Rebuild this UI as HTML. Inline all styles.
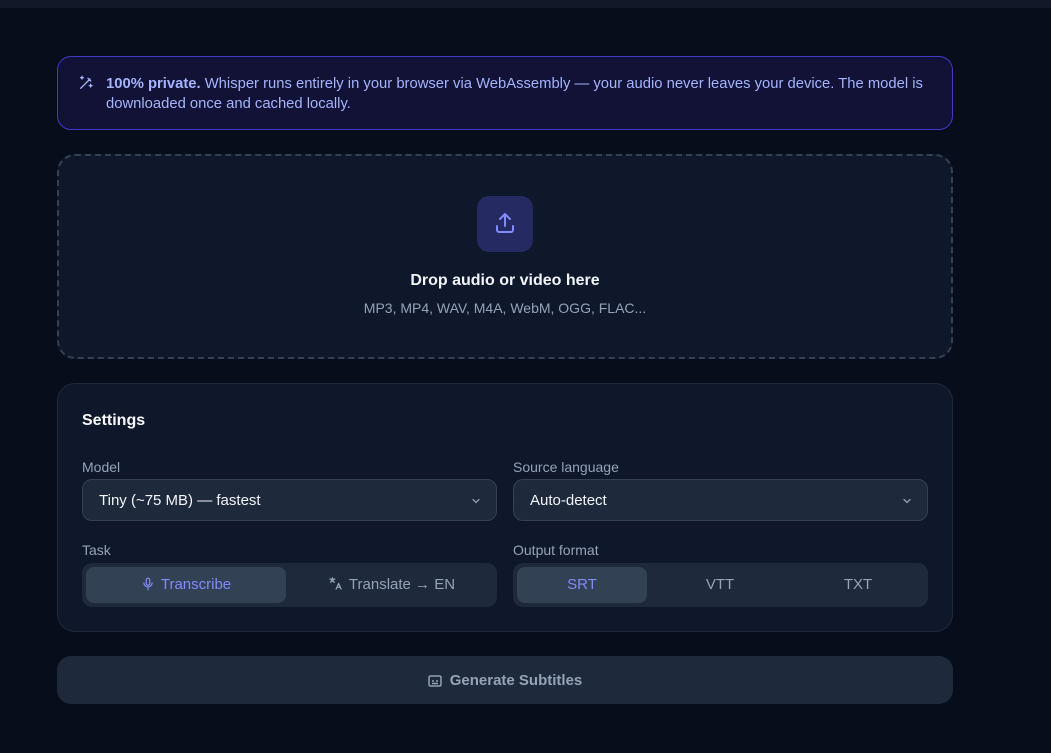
<!DOCTYPE html>
<html><head><meta charset="utf-8"><style>
*{box-sizing:border-box;margin:0;padding:0}
body{width:1051px;height:753px;background:#080d1c;font-family:"Liberation Sans",sans-serif;position:relative;overflow:hidden}
.top{position:absolute;left:0;top:0;width:1051px;height:8px;background:#111827}
.abs{position:absolute}
.banner{left:57px;top:56px;width:896px;height:74px;border:1px solid #4338ca;border-radius:14px;background:#111236}
.banner p{position:absolute;left:48px;top:17px;width:840px;font-size:14.8px;line-height:20px;color:#a5b4fc}
.drop{left:57px;top:154px;width:896px;height:205px;border:2px dashed #334155;border-radius:18px;background:#0f172a}
.ic{left:418px;top:40px;width:56px;height:56px;border-radius:12px;background:#262a63}
.settings{left:57px;top:383px;width:896px;height:249px;border:1px solid #1e293b;border-radius:18px;background:#0f172a}
.lbl{font-size:14px;color:#94a3b8}
.sel{height:42px;border:1px solid #334155;border-radius:10px;background:#1e293b;color:#f1f5f9;font-size:15px;line-height:41px;padding-left:16px}
.seg{height:44px;border-radius:10px;background:#1e293b}
.on{position:absolute;top:4px;height:36px;border-radius:8px;background:#334155}
.t{position:absolute;top:0;line-height:44px;font-size:15px;color:#94a3b8;text-align:center}
.t svg{vertical-align:-2px;margin-right:6px}
.btn{left:57px;top:656px;width:896px;height:48px;border-radius:14px;background:#1e293b;color:#94a3b8;font-weight:bold;font-size:15px;line-height:49px;text-align:center}
.chev{position:absolute;right:14px;top:15px}
</style></head><body>
<div class="top"></div>
<div class="abs banner">
<svg class="abs" style="left:20px;top:18px" width="16" height="16" viewBox="0 0 24 24" fill="none" stroke="#a5b4fc" stroke-width="2" stroke-linecap="round"><path d="M4 20L18 6M15 5l4 4M6 2v4M4 4h4M19 14v4M17 16h4"/></svg>
<p><b>100% private.</b> Whisper runs entirely in your browser via WebAssembly — your audio never leaves your device. The model is downloaded once and cached locally.</p>
</div>
<div class="abs drop">
<div class="abs ic"><svg class="abs" style="left:16px;top:15px" width="24" height="24" viewBox="0 0 24 24" fill="none" stroke="#818cf8" stroke-width="2" stroke-linecap="round" stroke-linejoin="round"><path d="M12 15V3M7 8l5-5 5 5M4 15v4a2 2 0 002 2h12a2 2 0 002-2v-4"/></svg></div>
<div class="abs" style="left:0;width:892px;top:116px;text-align:center;font-size:16px;font-weight:bold;color:#f1f5f9">Drop audio or video here</div>
<div class="abs" style="left:0;width:892px;top:144px;text-align:center;font-size:14px;color:#94a3b8">MP3, MP4, WAV, M4A, WebM, OGG, FLAC...</div>
</div>
<div class="abs settings">
<div class="abs" style="left:24px;top:28px;font-size:16px;font-weight:bold;color:#f8fafc">Settings</div>
<div class="abs lbl" style="left:24px;top:75px">Model</div>
<div class="abs sel" style="left:24px;top:95px;width:415px">Tiny (~75 MB) — fastest<svg class="chev" width="12" height="12" viewBox="0 0 24 24" fill="none" stroke="#94a3b8" stroke-width="2.5" stroke-linecap="round"><path d="M6 9l6 6 6-6"/></svg></div>
<div class="abs lbl" style="left:455px;top:75px">Source language</div>
<div class="abs sel" style="left:455px;top:95px;width:415px">Auto-detect<svg class="chev" width="12" height="12" viewBox="0 0 24 24" fill="none" stroke="#94a3b8" stroke-width="2.5" stroke-linecap="round"><path d="M6 9l6 6 6-6"/></svg></div>
<div class="abs lbl" style="left:24px;top:158px">Task</div>
<div class="abs seg" style="left:24px;top:179px;width:415px">
<div class="on" style="left:4px;width:200px"></div>
<div class="t" style="left:4px;width:200px;color:#818cf8"><svg width="14" height="14" viewBox="0 0 24 24" fill="none" stroke="#818cf8" stroke-width="2" stroke-linecap="round"><rect x="9" y="2" width="6" height="12" rx="3"/><path d="M5 10a7 7 0 0014 0M12 17v5"/></svg>Transcribe</div>
<div class="t" style="left:207px;width:205px"><svg width="15" height="15" viewBox="0 0 24 24" fill="none" stroke="#94a3b8" stroke-width="2" stroke-linecap="round" stroke-linejoin="round"><path d="M3 5h8M7 3v2M4 10l5-4M10 10L5 6M13 21l4-9 4 9M14.5 18h5"/></svg>Translate → EN</div>
</div>
<div class="abs lbl" style="left:455px;top:158px">Output format</div>
<div class="abs seg" style="left:455px;top:179px;width:415px">
<div class="on" style="left:4px;width:130px"></div>
<div class="t" style="left:4px;width:130px;color:#818cf8">SRT</div>
<div class="t" style="left:138px;width:138px">VTT</div>
<div class="t" style="left:276px;width:138px">TXT</div>
</div>
</div>
<div class="abs btn"><svg style="vertical-align:-2px;margin-right:8px" width="14" height="12" viewBox="0 0 14 12" fill="none" stroke="#94a3b8" stroke-width="1.5"><rect x="1" y="1" width="12" height="10" rx="1.5"/><path d="M4 6h2M8 6h2M4 8.5h6"/></svg>Generate Subtitles</div>
</body></html>
